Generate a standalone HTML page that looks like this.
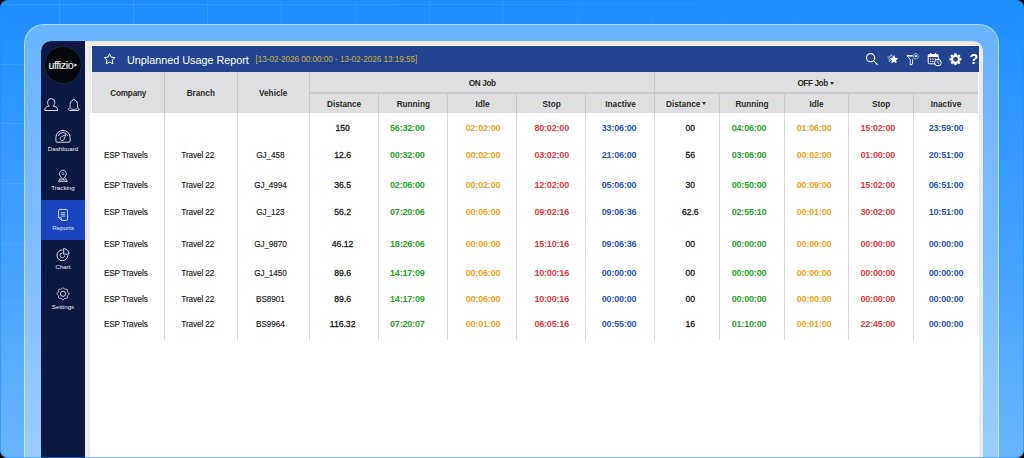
<!DOCTYPE html>
<html><head><meta charset="utf-8">
<style>
*{margin:0;padding:0;box-sizing:border-box}
html,body{width:1024px;height:458px;overflow:hidden;background:#000}
body{position:relative;font-family:"Liberation Sans",sans-serif}
#bg{position:absolute;left:0;top:0;width:1024px;height:458px;border-radius:8px;overflow:hidden;
 background:linear-gradient(180deg,#1e8fff 0%,#3c9cff 45%,#6ab6ff 100%)}
.gl{position:absolute;background:rgba(255,255,255,0.10)}
#frame{position:absolute;left:24px;top:24px;width:975px;height:460px;border-radius:20px;
 background:rgba(255,255,255,0.32);border:1px solid rgba(255,255,255,0.45)}
#win{position:absolute;left:41px;top:41px;width:942px;height:430px;border-radius:10px 10px 0 0;overflow:hidden;background:#ebebeb}
#side{position:absolute;left:41px;top:41px;width:44px;height:430px;background:#0a1842;border-radius:10px 0 0 0}
#panel{position:absolute;left:91px;top:45px;width:888px;height:420px;background:#fff}
#body{position:absolute;left:90px;top:113px;width:888px;height:350px;background:#fff}
#hbar{position:absolute;left:92px;top:46px;width:887px;height:26px;background:#22438f}
#thead{position:absolute;left:92px;top:72px;width:886px;height:41.3px;background:#dfdfe1}
.hl{position:absolute;background:#cdcdd2;height:1px}
.vl{position:absolute;width:1px;background:#d8d8de}
.th{position:absolute;width:80px;text-align:center;line-height:0;font-size:8.2px;font-weight:bold;color:#2a2a2a;white-space:nowrap}
.tn{position:absolute;width:80px;text-align:center;line-height:0;font-size:8.2px;color:#1c1c1c;-webkit-text-stroke:0.15px #1c1c1c;letter-spacing:-0.1px;white-space:nowrap}
.tb{position:absolute;width:80px;text-align:center;line-height:0;font-size:9px;font-weight:bold;letter-spacing:-0.18px;white-space:nowrap}
.td{position:absolute;width:80px;text-align:center;line-height:0;font-size:8.6px;-webkit-text-stroke:0.3px #1c1c1c;color:#1c1c1c;white-space:nowrap}
.car{position:absolute;width:0;height:0;border-left:2.2px solid transparent;border-right:2.2px solid transparent;border-top:3px solid #333}
#title{position:absolute;left:127px;top:59.8px;line-height:0;font-size:10.8px;color:#fff;white-space:nowrap}
#date{position:absolute;left:255.5px;top:60px;line-height:0;font-size:8.2px;letter-spacing:-0.05px;color:#c9b13e;white-space:nowrap}
.sl{position:absolute;width:44px;text-align:center;line-height:0;font-size:6.2px;color:#e8ecf5;white-space:nowrap}
#active{position:absolute;left:41px;top:200.3px;width:44px;height:39.6px;background:#1a44be}
#logo{position:absolute;left:44px;top:45.5px;width:38px;height:38px;border-radius:50%;background:#05070f;border:1px solid #1b2340}
#logotxt{position:absolute;left:48.4px;top:64.5px;line-height:0;font-size:10.8px;color:#f0f0f0;-webkit-text-stroke:0.1px #f0f0f0;letter-spacing:-0.45px;white-space:nowrap}
#q{position:absolute;left:969.6px;top:59.3px;line-height:0;font-size:14px;font-weight:bold;color:#fff}
#edge{position:absolute;left:0;top:0;width:1024px;height:458px;border-radius:8px;border:1px solid rgba(30,140,255,0.55)}
</style></head><body>
<div id="bg"><div class="gl" style="left:59px;top:0;width:1px;height:24px;background:rgba(255,255,255,0.100)"></div><div class="gl" style="left:133px;top:0;width:1px;height:24px;background:rgba(255,255,255,0.091)"></div><div class="gl" style="left:207px;top:0;width:1px;height:24px;background:rgba(255,255,255,0.082)"></div><div class="gl" style="left:281px;top:0;width:1px;height:24px;background:rgba(255,255,255,0.073)"></div><div class="gl" style="left:355px;top:0;width:1px;height:24px;background:rgba(255,255,255,0.064)"></div><div class="gl" style="left:429px;top:0;width:1px;height:24px;background:rgba(255,255,255,0.055)"></div><div class="gl" style="left:503px;top:0;width:1px;height:24px;background:rgba(255,255,255,0.046)"></div><div class="gl" style="left:577px;top:0;width:1px;height:24px;background:rgba(255,255,255,0.037)"></div><div class="gl" style="left:651px;top:0;width:1px;height:24px;background:rgba(255,255,255,0.028)"></div><div class="gl" style="left:725px;top:0;width:1px;height:24px;background:rgba(255,255,255,0.019)"></div><div class="gl" style="left:799px;top:0;width:1px;height:24px;background:rgba(255,255,255,0.010)"></div><div class="gl" style="left:873px;top:0;width:1px;height:24px;background:rgba(255,255,255,0.001)"></div><div class="gl" style="left:0;top:4.0px;width:1024px;height:1px;background:linear-gradient(90deg,rgba(255,255,255,0.100),rgba(255,255,255,0.060) 60%,rgba(255,255,255,0) 75%)"></div><div class="gl" style="left:0;top:63.7px;width:24px;height:1px;background:rgba(255,255,255,0.089)"></div><div class="gl" style="left:0;top:123.4px;width:24px;height:1px;background:rgba(255,255,255,0.078)"></div><div class="gl" style="left:0;top:183.1px;width:24px;height:1px;background:rgba(255,255,255,0.067)"></div><div class="gl" style="left:0;top:242.8px;width:24px;height:1px;background:rgba(255,255,255,0.056)"></div><div class="gl" style="left:0;top:302.5px;width:24px;height:1px;background:rgba(255,255,255,0.045)"></div><div class="gl" style="left:0;top:362.2px;width:24px;height:1px;background:rgba(255,255,255,0.034)"></div><div class="gl" style="left:0;top:421.9px;width:24px;height:1px;background:rgba(255,255,255,0.023)"></div></div>
<div id="frame"></div>
<div id="win"></div>
<div id="side"></div>
<div id="active"></div>
<div id="logo"></div>
<div id="panel"></div>
<div id="body"></div>
<div id="hbar"></div>
<div id="title">Unplanned Usage Report</div>
<div id="date">[13-02-2026 00:00:00 - 13-02-2026 13:19:55]</div>
<div id="thead"></div>
<div class="hl" style="left:309px;top:92.2px;width:669px;height:1.4px;background:#cbcbd0"></div>
<div class="vl" style="left:164px;top:72px;height:41px;background:#c9c9cf"></div>
<div class="vl" style="left:164px;top:113px;height:227px"></div>
<div class="vl" style="left:237px;top:72px;height:41px;background:#c9c9cf"></div>
<div class="vl" style="left:237px;top:113px;height:227px"></div>
<div class="vl" style="left:309px;top:72px;height:41px;background:#c9c9cf"></div>
<div class="vl" style="left:309px;top:113px;height:227px"></div>
<div class="vl" style="left:378px;top:93px;height:20px;background:#c9c9cf"></div>
<div class="vl" style="left:378px;top:113px;height:227px"></div>
<div class="vl" style="left:447px;top:93px;height:20px;background:#c9c9cf"></div>
<div class="vl" style="left:447px;top:113px;height:227px"></div>
<div class="vl" style="left:516px;top:93px;height:20px;background:#c9c9cf"></div>
<div class="vl" style="left:516px;top:113px;height:227px"></div>
<div class="vl" style="left:585px;top:93px;height:20px;background:#c9c9cf"></div>
<div class="vl" style="left:585px;top:113px;height:227px"></div>
<div class="vl" style="left:654px;top:72px;height:41px;background:#c9c9cf"></div>
<div class="vl" style="left:654px;top:113px;height:227px"></div>
<div class="vl" style="left:719px;top:93px;height:20px;background:#c9c9cf"></div>
<div class="vl" style="left:719px;top:113px;height:227px"></div>
<div class="vl" style="left:784px;top:93px;height:20px;background:#c9c9cf"></div>
<div class="vl" style="left:784px;top:113px;height:227px"></div>
<div class="vl" style="left:848px;top:93px;height:20px;background:#c9c9cf"></div>
<div class="vl" style="left:848px;top:113px;height:227px"></div>
<div class="vl" style="left:913px;top:93px;height:20px;background:#c9c9cf"></div>
<div class="vl" style="left:913px;top:113px;height:227px"></div>
<div class="th" style="left:88.2px;top:93.6px"><span style="letter-spacing:-0.2px">Company</span></div>
<div class="th" style="left:160.8px;top:93.6px">Branch</div>
<div class="th" style="left:233.2px;top:93.6px">Vehicle</div>
<div class="th" style="left:442.2px;top:84.2px"><span style="letter-spacing:-0.35px">ON Job</span></div>
<div class="th" style="left:772.6px;top:84.2px"><span style="letter-spacing:-0.4px">OFF Job</span></div>
<div class="th" style="left:304.1px;top:105.0px">Distance</div>
<div class="th" style="left:373.3px;top:105.0px">Running</div>
<div class="th" style="left:442.5px;top:105.0px">Idle</div>
<div class="th" style="left:511.7px;top:105.0px">Stop</div>
<div class="th" style="left:580.6px;top:105.0px">Inactive</div>
<div class="th" style="left:643.2px;top:105.0px">Distance</div>
<div class="th" style="left:712.0px;top:105.0px">Running</div>
<div class="th" style="left:776.6px;top:105.0px">Idle</div>
<div class="th" style="left:841.2px;top:105.0px">Stop</div>
<div class="th" style="left:906.0px;top:105.0px">Inactive</div>
<div class="car" style="left:829.8px;top:81.6px"></div>
<div class="car" style="left:702px;top:102.2px"></div>
<div class="td" style="left:302.6px;top:127.8px;color:#222">150</div>
<div class="tb" style="left:367.3px;top:127.8px;color:#2aa52a">56:32:00</div>
<div class="tb" style="left:443.0px;top:127.8px;color:#eaa322">02:02:00</div>
<div class="tb" style="left:511.7px;top:127.8px;color:#e23a45">80:02:00</div>
<div class="tb" style="left:579.1px;top:127.8px;color:#2a56b5">33:06:00</div>
<div class="td" style="left:650.3px;top:127.8px;color:#222">00</div>
<div class="tb" style="left:709.0px;top:127.8px;color:#2aa52a">04:06:00</div>
<div class="tb" style="left:774.1px;top:127.8px;color:#eaa322">01:06:00</div>
<div class="tb" style="left:837.8px;top:127.8px;color:#e23a45">15:02:00</div>
<div class="tb" style="left:906.0px;top:127.8px;color:#2a56b5">23:59:00</div>
<div class="tn" style="left:85.8px;top:156.3px;color:#222">ESP Travels</div>
<div class="tn" style="left:157.8px;top:156.3px;color:#222">Travel 22</div>
<div class="tn" style="left:230.4px;top:156.3px;color:#222">GJ_458</div>
<div class="td" style="left:302.6px;top:155.3px;color:#222">12.6</div>
<div class="tb" style="left:367.3px;top:155.3px;color:#2aa52a">00:32:00</div>
<div class="tb" style="left:443.0px;top:155.3px;color:#eaa322">00:02:00</div>
<div class="tb" style="left:511.7px;top:155.3px;color:#e23a45">03:02:00</div>
<div class="tb" style="left:579.1px;top:155.3px;color:#2a56b5">21:06:00</div>
<div class="td" style="left:650.3px;top:155.3px;color:#222">56</div>
<div class="tb" style="left:709.0px;top:155.3px;color:#2aa52a">03:06:00</div>
<div class="tb" style="left:774.1px;top:155.3px;color:#eaa322">00:02:00</div>
<div class="tb" style="left:837.8px;top:155.3px;color:#e23a45">01:00:00</div>
<div class="tb" style="left:906.0px;top:155.3px;color:#2a56b5">20:51:00</div>
<div class="tn" style="left:85.8px;top:186.3px;color:#222">ESP Travels</div>
<div class="tn" style="left:157.8px;top:186.3px;color:#222">Travel 22</div>
<div class="tn" style="left:230.4px;top:186.3px;color:#222">GJ_4994</div>
<div class="td" style="left:302.6px;top:185.3px;color:#222">36.5</div>
<div class="tb" style="left:367.3px;top:185.3px;color:#2aa52a">02:06:00</div>
<div class="tb" style="left:443.0px;top:185.3px;color:#eaa322">00:02:00</div>
<div class="tb" style="left:511.7px;top:185.3px;color:#e23a45">12:02:00</div>
<div class="tb" style="left:579.1px;top:185.3px;color:#2a56b5">05:06:00</div>
<div class="td" style="left:650.3px;top:185.3px;color:#222">30</div>
<div class="tb" style="left:709.0px;top:185.3px;color:#2aa52a">00:50:00</div>
<div class="tb" style="left:774.1px;top:185.3px;color:#eaa322">00:09:00</div>
<div class="tb" style="left:837.8px;top:185.3px;color:#e23a45">15:02:00</div>
<div class="tb" style="left:906.0px;top:185.3px;color:#2a56b5">06:51:00</div>
<div class="tn" style="left:85.8px;top:213.3px;color:#222">ESP Travels</div>
<div class="tn" style="left:157.8px;top:213.3px;color:#222">Travel 22</div>
<div class="tn" style="left:230.4px;top:213.3px;color:#222">GJ_123</div>
<div class="td" style="left:302.6px;top:212.3px;color:#222">56.2</div>
<div class="tb" style="left:367.3px;top:212.3px;color:#2aa52a">07:20:06</div>
<div class="tb" style="left:443.0px;top:212.3px;color:#eaa322">00:05:00</div>
<div class="tb" style="left:511.7px;top:212.3px;color:#e23a45">09:02:16</div>
<div class="tb" style="left:579.1px;top:212.3px;color:#2a56b5">09:06:36</div>
<div class="td" style="left:650.3px;top:212.3px;color:#222">62.6</div>
<div class="tb" style="left:709.0px;top:212.3px;color:#2aa52a">02:55:10</div>
<div class="tb" style="left:774.1px;top:212.3px;color:#eaa322">00:01:00</div>
<div class="tb" style="left:837.8px;top:212.3px;color:#e23a45">30:02:00</div>
<div class="tb" style="left:906.0px;top:212.3px;color:#2a56b5">10:51:00</div>
<div class="tn" style="left:85.8px;top:244.5px;color:#222">ESP Travels</div>
<div class="tn" style="left:157.8px;top:244.5px;color:#222">Travel 22</div>
<div class="tn" style="left:230.4px;top:244.5px;color:#222">GJ_9870</div>
<div class="td" style="left:302.6px;top:243.5px;color:#222">46.12</div>
<div class="tb" style="left:367.3px;top:243.5px;color:#2aa52a">18:26:06</div>
<div class="tb" style="left:443.0px;top:243.5px;color:#eaa322">00:00:00</div>
<div class="tb" style="left:511.7px;top:243.5px;color:#e23a45">15:10:16</div>
<div class="tb" style="left:579.1px;top:243.5px;color:#2a56b5">09:06:36</div>
<div class="td" style="left:650.3px;top:243.5px;color:#222">00</div>
<div class="tb" style="left:709.0px;top:243.5px;color:#2aa52a">00:00:00</div>
<div class="tb" style="left:774.1px;top:243.5px;color:#eaa322">00:00:00</div>
<div class="tb" style="left:837.8px;top:243.5px;color:#e23a45">00:00:00</div>
<div class="tb" style="left:906.0px;top:243.5px;color:#2a56b5">00:00:00</div>
<div class="tn" style="left:85.8px;top:273.6px;color:#222">ESP Travels</div>
<div class="tn" style="left:157.8px;top:273.6px;color:#222">Travel 22</div>
<div class="tn" style="left:230.4px;top:273.6px;color:#222">GJ_1450</div>
<div class="td" style="left:302.6px;top:272.6px;color:#222">89.6</div>
<div class="tb" style="left:367.3px;top:272.6px;color:#2aa52a">14:17:09</div>
<div class="tb" style="left:443.0px;top:272.6px;color:#eaa322">00:06:00</div>
<div class="tb" style="left:511.7px;top:272.6px;color:#e23a45">10:00:16</div>
<div class="tb" style="left:579.1px;top:272.6px;color:#2a56b5">00:00:00</div>
<div class="td" style="left:650.3px;top:272.6px;color:#222">00</div>
<div class="tb" style="left:709.0px;top:272.6px;color:#2aa52a">00:00:00</div>
<div class="tb" style="left:774.1px;top:272.6px;color:#eaa322">00:00:00</div>
<div class="tb" style="left:837.8px;top:272.6px;color:#e23a45">00:00:00</div>
<div class="tb" style="left:906.0px;top:272.6px;color:#2a56b5">00:00:00</div>
<div class="tn" style="left:85.8px;top:299.5px;color:#222">ESP Travels</div>
<div class="tn" style="left:157.8px;top:299.5px;color:#222">Travel 22</div>
<div class="tn" style="left:230.4px;top:299.5px;color:#222">BS8901</div>
<div class="td" style="left:302.6px;top:298.5px;color:#222">89.6</div>
<div class="tb" style="left:367.3px;top:298.5px;color:#2aa52a">14:17:09</div>
<div class="tb" style="left:443.0px;top:298.5px;color:#eaa322">00:06:00</div>
<div class="tb" style="left:511.7px;top:298.5px;color:#e23a45">10:00:16</div>
<div class="tb" style="left:579.1px;top:298.5px;color:#2a56b5">00:00:00</div>
<div class="td" style="left:650.3px;top:298.5px;color:#222">00</div>
<div class="tb" style="left:709.0px;top:298.5px;color:#2aa52a">00:00:00</div>
<div class="tb" style="left:774.1px;top:298.5px;color:#eaa322">00:00:00</div>
<div class="tb" style="left:837.8px;top:298.5px;color:#e23a45">00:00:00</div>
<div class="tb" style="left:906.0px;top:298.5px;color:#2a56b5">00:00:00</div>
<div class="tn" style="left:85.8px;top:324.9px;color:#222">ESP Travels</div>
<div class="tn" style="left:157.8px;top:324.9px;color:#222">Travel 22</div>
<div class="tn" style="left:230.4px;top:324.9px;color:#222">BS9964</div>
<div class="td" style="left:302.6px;top:323.9px;color:#222">116.32</div>
<div class="tb" style="left:367.3px;top:323.9px;color:#2aa52a">07:20:07</div>
<div class="tb" style="left:443.0px;top:323.9px;color:#eaa322">00:01:00</div>
<div class="tb" style="left:511.7px;top:323.9px;color:#e23a45">06:05:16</div>
<div class="tb" style="left:579.1px;top:323.9px;color:#2a56b5">00:55:00</div>
<div class="td" style="left:650.3px;top:323.9px;color:#222">16</div>
<div class="tb" style="left:709.0px;top:323.9px;color:#2aa52a">01:10:00</div>
<div class="tb" style="left:774.1px;top:323.9px;color:#eaa322">00:01:00</div>
<div class="tb" style="left:837.8px;top:323.9px;color:#e23a45">22:45:00</div>
<div class="tb" style="left:906.0px;top:323.9px;color:#2a56b5">00:00:00</div>
<svg width="1024" height="458" viewBox="0 0 1024 458" style="position:absolute;left:0;top:0">
<path d="M109.60,53.70 L111.19,57.12 L114.93,57.57 L112.17,60.13 L112.89,63.83 L109.60,62.00 L106.31,63.83 L107.03,60.13 L104.27,57.57 L108.01,57.12 Z" fill="none" stroke="#ffffff" stroke-width="1" stroke-linejoin="round"/>
<circle cx="870.6" cy="57.7" r="4.1" fill="none" stroke="#ffffff" stroke-width="1.1"/>
<line x1="873.6" y1="60.7" x2="877.2" y2="64.3" stroke="#ffffff" stroke-width="1.2" stroke-linecap="round"/>
<path d="M891.20,54.60 L892.26,56.94 L894.81,57.23 L892.91,58.96 L893.43,61.47 L891.20,60.20 L888.97,61.47 L889.49,58.96 L887.59,57.23 L890.14,56.94 Z" fill="none" stroke="#ffffff" stroke-opacity="0.8" stroke-width="0.7" stroke-linejoin="round"/>
<path d="M894.00,54.70 L895.41,57.66 L898.66,58.09 L896.28,60.34 L896.88,63.56 L894.00,62.00 L891.12,63.56 L891.72,60.34 L889.34,58.09 L892.59,57.66 Z" fill="#22438f"/>
<path d="M894.00,55.30 L895.20,57.94 L898.09,58.27 L895.95,60.23 L896.53,63.08 L894.00,61.65 L891.47,63.08 L892.05,60.23 L889.91,58.27 L892.80,57.94 Z" fill="#ffffff" stroke="#ffffff" stroke-width="0.3" stroke-linejoin="round"/>
<rect x="906.8" y="55.1" width="6.8" height="1.5" fill="#ffffff"/>
<path d="M907.1,55.9 L910.2,59.4 V65 L912.5,64.1 V59.4 L913.7,57.9" fill="none" stroke="#ffffff" stroke-width="0.85" stroke-linejoin="round"/>
<circle cx="915.7" cy="56.2" r="3.2" fill="#22438f"/>
<circle cx="915.7" cy="56.2" r="2.6" fill="none" stroke="#ffffff" stroke-width="0.85" stroke-dasharray="1.3 0.45"/>
<circle cx="915.7" cy="56.2" r="1.1" fill="#ffffff"/>
<rect x="928.2" y="54.6" width="10" height="9.2" rx="1" fill="none" stroke="#ffffff" stroke-width="1"/>
<rect x="928.2" y="54.6" width="10" height="2.4" fill="#ffffff"/>
<line x1="930.8" y1="52.9" x2="930.8" y2="55.2" stroke="#ffffff" stroke-width="1"/>
<line x1="935.6" y1="52.9" x2="935.6" y2="55.2" stroke="#ffffff" stroke-width="1"/>
<rect x="930.0" y="58.5" width="1.2" height="1.2" fill="#ffffff"/>
<rect x="930.0" y="60.9" width="1.2" height="1.2" fill="#ffffff"/>
<rect x="932.4" y="58.5" width="1.2" height="1.2" fill="#ffffff"/>
<rect x="932.4" y="60.9" width="1.2" height="1.2" fill="#ffffff"/>
<rect x="934.8" y="58.5" width="1.2" height="1.2" fill="#ffffff"/>
<rect x="934.8" y="60.9" width="1.2" height="1.2" fill="#ffffff"/>
<circle cx="937.9" cy="62.6" r="3.3" fill="#22438f" stroke="#ffffff" stroke-width="1"/>
<path d="M937.9,60.8 V62.8 L939,63.6" fill="none" stroke="#ffffff" stroke-width="0.8"/>
<path d="M954.35,54.95 L954.53,53.48 L956.47,53.48 L956.65,54.95 L957.76,55.41 L958.93,54.50 L960.30,55.87 L959.39,57.04 L959.85,58.15 L961.32,58.33 L961.32,60.27 L959.85,60.45 L959.39,61.56 L960.30,62.73 L958.93,64.10 L957.76,63.19 L956.65,63.65 L956.47,65.12 L954.53,65.12 L954.35,63.65 L953.24,63.19 L952.07,64.10 L950.70,62.73 L951.61,61.56 L951.15,60.45 L949.68,60.27 L949.68,58.33 L951.15,58.15 L951.61,57.04 L950.70,55.87 L952.07,54.50 L953.24,55.41 Z" fill="#ffffff" stroke="#ffffff" stroke-width="0.3" stroke-linejoin="round"/>
<circle cx="955.5" cy="59.3" r="2.4" fill="#22438f"/>
<path d="M49.3,106.1 C48,105.3 47.6,104.1 47.6,102.2 A3.6,3.6 0 0 1 54.8,102.2 C54.8,104.1 54.4,105.3 53.1,106.1 C56.4,106.5 57.7,108 57.7,110.5 H44.7 C44.7,108 46,106.5 49.3,106.1 Z" fill="none" stroke="rgba(235,240,250,0.95)" stroke-width="0.95" stroke-linejoin="round"/>
<path d="M73.8,98.9 C74.3,98.9 74.5,99.4 74.5,100 C76.7,100.6 77.5,102.6 77.5,104.6 V107.4 L79.3,109.2 C79.3,110 78.8,110.5 78,110.5 H69.6 C68.8,110.5 68.3,110 68.3,109.2 L70.1,107.4 V104.6 C70.1,102.6 70.9,100.6 73.1,100 C73.1,99.4 73.3,98.9 73.8,98.9 Z" fill="none" stroke="rgba(235,240,250,0.95)" stroke-width="0.9" stroke-linejoin="round"/>
<path d="M70.3,108.6 Q73.8,110.6 77.3,108.6" fill="none" stroke="rgba(235,240,250,0.95)" stroke-width="0.8"/>
<path d="M56.8,142.2 C56.1,142.2 55.9,141.8 55.9,141.1 L55.9,137.5 A7.1,7.1 0 0 1 70.1,137.5 L70.1,141.1 C70.1,141.8 69.9,142.2 69.2,142.2 Z" fill="none" stroke="rgba(235,240,250,0.95)" stroke-width="0.9" stroke-linejoin="round"/>
<path d="M58.2,135.9 A5.1,5.1 0 0 1 67.8,135.9" fill="none" stroke="rgba(235,240,250,0.95)" stroke-width="0.8"/>
<path d="M65.8,134.6 L64.08,139.29 A2,2 0 1 1 61.32,136.81 Z" fill="none" stroke="rgba(235,240,250,0.95)" stroke-width="0.85" stroke-linejoin="round"/>
<path d="M62.9,179.6 L60.08,175.78 A3.5,3.5 0 1 1 65.72,175.78 Z" fill="none" stroke="rgba(235,240,250,0.95)" stroke-width="0.85" stroke-linejoin="round"/>
<circle cx="62.9" cy="173.6" r="1.1" fill="none" stroke="rgba(235,240,250,0.95)" stroke-width="0.6"/>
<path d="M60.5,178 L58.5,181.6 H67.3 L65.3,178" fill="none" stroke="rgba(235,240,250,0.95)" stroke-width="0.8" stroke-linejoin="round"/>
<path d="M59.4,179.8 Q62.9,178.8 66.4,181.4 M66.4,179.8 Q62.9,178.8 59.4,181.4" fill="none" stroke="rgba(235,240,250,0.95)" stroke-width="0.55"/>
<path d="M59.8,209.4 H66.3 Q67.6,209.4 67.6,210.8 V219 Q67.6,220.4 66.3,220.4 H61.6 L58.6,217.4 V210.8 Q58.6,209.4 59.8,209.4 Z" fill="none" stroke="rgba(235,240,250,0.95)" stroke-width="0.9" stroke-linejoin="round"/>
<path d="M58.6,217.4 L61.2,217.6 L61.6,220.4" fill="none" stroke="rgba(235,240,250,0.95)" stroke-width="0.7"/>
<line x1="60.9" y1="212.6" x2="65.2" y2="212.6" stroke="rgba(235,240,250,0.95)" stroke-width="0.8"/>
<line x1="60.9" y1="214.4" x2="65.2" y2="214.4" stroke="rgba(235,240,250,0.95)" stroke-width="0.8"/>
<line x1="60.9" y1="216.1" x2="65.2" y2="216.1" stroke="rgba(235,240,250,0.95)" stroke-width="0.8"/>
<path d="M62.4,249.9 A5.4,5.4 0 1 0 67.8,255.3" fill="none" stroke="rgba(235,240,250,0.95)" stroke-width="1"/>
<path d="M62.4,252.9 A2.4,2.4 0 1 0 64.8,255.3" fill="none" stroke="rgba(235,240,250,0.95)" stroke-width="0.8"/>
<path d="M63.6,248.6 V254.1 H69.1 A5.5,5.5 0 0 0 63.6,248.6 Z" fill="none" stroke="rgba(235,240,250,0.95)" stroke-width="0.9" stroke-linejoin="round"/>
<path d="M63.00,287.80 L63.23,287.83 L63.46,287.93 L63.68,288.09 L63.87,288.28 L64.05,288.50 L64.22,288.73 L64.37,288.94 L64.52,289.13 L64.67,289.27 L64.84,289.37 L65.02,289.41 L65.23,289.42 L65.47,289.40 L65.72,289.35 L66.00,289.31 L66.28,289.28 L66.56,289.28 L66.82,289.32 L67.05,289.42 L67.24,289.56 L67.38,289.75 L67.48,289.98 L67.52,290.24 L67.52,290.52 L67.49,290.80 L67.45,291.08 L67.40,291.33 L67.38,291.57 L67.39,291.78 L67.43,291.96 L67.53,292.13 L67.67,292.28 L67.86,292.43 L68.07,292.58 L68.30,292.75 L68.52,292.93 L68.71,293.12 L68.87,293.34 L68.97,293.57 L69.00,293.80 L68.97,294.03 L68.87,294.26 L68.71,294.48 L68.52,294.67 L68.30,294.85 L68.07,295.02 L67.86,295.17 L67.67,295.32 L67.53,295.47 L67.43,295.64 L67.39,295.82 L67.38,296.03 L67.40,296.27 L67.45,296.52 L67.49,296.80 L67.52,297.08 L67.52,297.36 L67.48,297.62 L67.38,297.85 L67.24,298.04 L67.05,298.18 L66.82,298.28 L66.56,298.32 L66.28,298.32 L66.00,298.29 L65.72,298.25 L65.47,298.20 L65.23,298.18 L65.02,298.19 L64.84,298.23 L64.67,298.33 L64.52,298.47 L64.37,298.66 L64.22,298.87 L64.05,299.10 L63.87,299.32 L63.68,299.51 L63.46,299.67 L63.23,299.77 L63.00,299.80 L62.77,299.77 L62.54,299.67 L62.32,299.51 L62.13,299.32 L61.95,299.10 L61.78,298.87 L61.63,298.66 L61.48,298.47 L61.33,298.33 L61.16,298.23 L60.98,298.19 L60.77,298.18 L60.53,298.20 L60.28,298.25 L60.00,298.29 L59.72,298.32 L59.44,298.32 L59.18,298.28 L58.95,298.18 L58.76,298.04 L58.62,297.85 L58.52,297.62 L58.48,297.36 L58.48,297.08 L58.51,296.80 L58.55,296.52 L58.60,296.27 L58.62,296.03 L58.61,295.82 L58.57,295.64 L58.47,295.47 L58.33,295.32 L58.14,295.17 L57.93,295.02 L57.70,294.85 L57.48,294.67 L57.29,294.48 L57.13,294.26 L57.03,294.03 L57.00,293.80 L57.03,293.57 L57.13,293.34 L57.29,293.12 L57.48,292.93 L57.70,292.75 L57.93,292.58 L58.14,292.43 L58.33,292.28 L58.47,292.13 L58.57,291.96 L58.61,291.78 L58.62,291.57 L58.60,291.33 L58.55,291.08 L58.51,290.80 L58.48,290.52 L58.48,290.24 L58.52,289.98 L58.62,289.75 L58.76,289.56 L58.95,289.42 L59.18,289.32 L59.44,289.28 L59.72,289.28 L60.00,289.31 L60.28,289.35 L60.53,289.40 L60.77,289.42 L60.98,289.41 L61.16,289.37 L61.33,289.27 L61.48,289.13 L61.63,288.94 L61.78,288.73 L61.95,288.50 L62.13,288.28 L62.32,288.09 L62.54,287.93 L62.77,287.83 Z" fill="none" stroke="rgba(235,240,250,0.95)" stroke-width="0.9"/>
<circle cx="63" cy="293.8" r="2.6" fill="none" stroke="rgba(235,240,250,0.95)" stroke-width="0.9"/>
<path d="M74.4,63.5 L77.5,65.1 L74.4,66.7 Z" fill="#f0f0f0"/>
</svg>
<div id="logotxt">uffizio</div>
<div id="q">?</div>
<div class="sl" style="left:41px;top:149.2px">Dashboard</div>
<div class="sl" style="left:41px;top:188.4px">Tracking</div>
<div class="sl" style="left:41px;top:227.5px">Reports</div>
<div class="sl" style="left:41px;top:267px">Chart</div>
<div class="sl" style="left:41px;top:306.5px">Settings</div>
<div id="edge"></div>
</body></html>
